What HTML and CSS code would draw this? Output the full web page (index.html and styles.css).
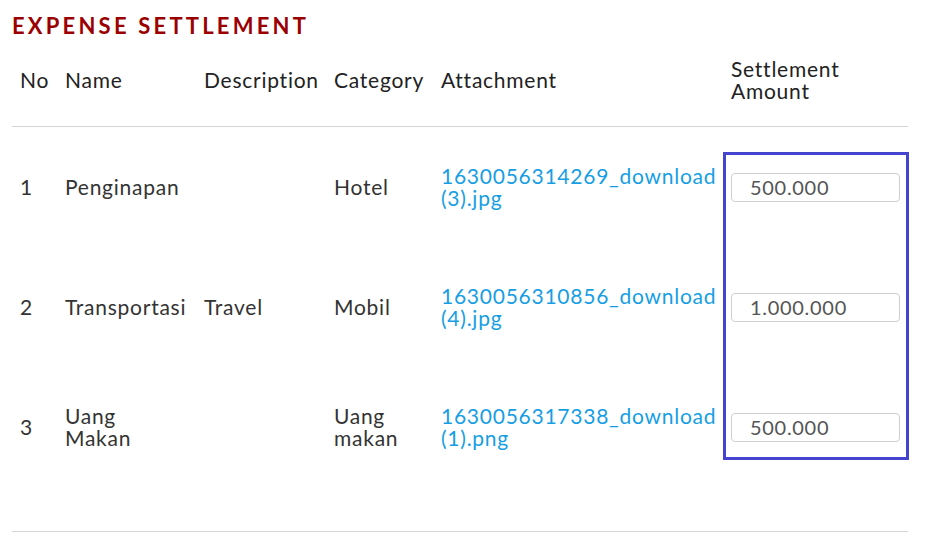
FILE: index.html
```html
<!DOCTYPE html>
<html>
<head>
<meta charset="utf-8">
<link rel="stylesheet" href="styles.css">
</head>
<body>
<div class="page">
  <h2 class="title">EXPENSE SETTLEMENT</h2>
  <div class="table-wrap">
    <table class="expense">
      <colgroup>
        <col class="c-no"><col class="c-name"><col class="c-desc"><col class="c-cat"><col class="c-att"><col class="c-amt">
      </colgroup>
      <thead>
        <tr>
          <th>No</th><th>Name</th><th>Description</th><th>Category</th><th>Attachment</th><th class="amt-head">Settlement<br>Amount</th>
        </tr>
      </thead>
      <tbody>
        <tr>
          <td>1</td><td>Penginapan</td><td></td><td>Hotel</td>
          <td><a class="file" href="#">1630056314269_download (3).jpg</a></td>
          <td><input class="amount" type="text" value="500.000"></td>
        </tr>
        <tr>
          <td>2</td><td>Transportasi</td><td>Travel</td><td>Mobil</td>
          <td><a class="file" href="#">1630056310856_download (4).jpg</a></td>
          <td><input class="amount" type="text" value="1.000.000"></td>
        </tr>
        <tr>
          <td>3</td><td>Uang Makan</td><td></td><td>Uang makan</td>
          <td><a class="file" href="#">1630056317338_download (1).png</a></td>
          <td><input class="amount" type="text" value="500.000"></td>
        </tr>
        <tr class="spacer"><td colspan="6"></td></tr>
      </tbody>
    </table>
    <div class="highlight"></div>
  </div>
</div>
</body>
</html>
```
FILE: styles.css
```css
html, body {
  margin: 0;
  padding: 0;
  background: #fff;
}
body {
  font-family: Lato, "Liberation Sans", sans-serif;
  color: #333;
}
.page {
  padding: 0 18px 0 12px;
}
.title {
  margin: 0;
  padding-top: 12px;
  height: 28px;
  line-height: 28px;
  font-size: 22px;
  font-weight: 700;
  letter-spacing: 3.2px;
  color: #9b0000;
}
.table-wrap {
  position: relative;
}
.expense {
  width: 896px;
  border-collapse: collapse;
  table-layout: fixed;
  font-size: 21px;
  letter-spacing: 0.75px;
  line-height: 22px;
}
.c-no { width: 45px; }
.c-name { width: 139px; }
.c-desc { width: 130px; }
.c-cat { width: 107px; }
.c-att { width: 290px; }
.c-amt { width: 185px; }
.expense th {
  font-weight: 400;
  text-align: left;
  vertical-align: middle;
  padding: 0 8px 6px 8px;
  height: 80px;
  border-bottom: 1px solid #d6d6d6;
  color: #222;
}
.expense td {
  padding: 0 8px;
  height: 120px;
  vertical-align: middle;
}
.expense tr.spacer td {
  height: 44px;
  border-bottom: 1px solid #d6d6d6;
}
.file {
  color: #169ee4;
  text-decoration: none;
}
.amount {
  box-sizing: border-box;
  width: 169px;
  height: 29px;
  margin: 0;
  padding: 0 18px;
  border: 1px solid #cfcfcf;
  border-radius: 4px;
  font-family: Lato, "Liberation Sans", sans-serif;
  font-size: 20px;
  letter-spacing: 0.7px;
  color: #555;
  background: #fff;
}
.highlight {
  position: absolute;
  left: 711px;
  top: 112px;
  width: 180px;
  height: 302px;
  border: 3px solid #4444cf;
  pointer-events: none;
}
```
